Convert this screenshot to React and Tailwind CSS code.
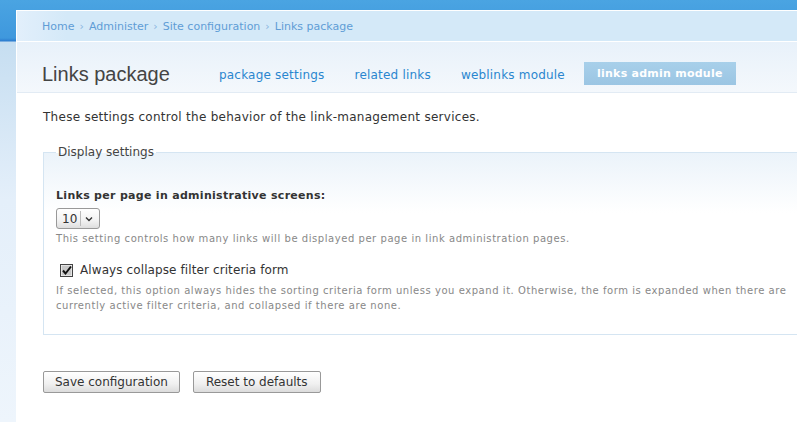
export default function App() {
  const font = { fontFamily: '"DejaVu Sans", Verdana, sans-serif' };
  return (
    <div
      className="w-[797px] h-[422px] overflow-hidden bg-[linear-gradient(to_bottom,#4aa4e2_0px,#3f98dd_38px,#2c7ccf_41px,#c6def1_42px,#e4effa_200px,#eef5fc_422px)]"
      style={font}
    >
      <div className="ml-[16px] mt-[10px] w-[800px] h-[420px] bg-white border-l border-t border-white flex flex-col">
        {/* breadcrumb */}
        <div className="h-[31px] flex items-center pt-[3px] pl-[25px] text-[11px] text-[#5f9dd6] bg-[linear-gradient(to_right,#e2effb_0px,#d4e9f8_50px,#d4e9f8_100%)] border-b border-white">
          <span>Home</span>
          <span className="mx-[5px] text-[#8ab6e0]">›</span>
          <span>Administer</span>
          <span className="mx-[5px] text-[#8ab6e0]">›</span>
          <span>Site configuration</span>
          <span className="mx-[5px] text-[#8ab6e0]">›</span>
          <span>Links package</span>
        </div>
        {/* header */}
        <div className="h-[51px] flex items-end pb-[7px] pl-[25px] bg-[linear-gradient(to_bottom,#e8f1fa,#f4f8fc)] border-b border-[#e2ebf4]">
          <h1
            className="text-[20px] text-[#444] w-[177px] h-[23px] flex items-center"
            style={{ fontFamily: '"Liberation Sans", Arial, sans-serif' }}
          >
            Links package
          </h1>
          <nav className="flex items-center h-[23px] text-[12px] text-[#2a86cf] tracking-[0.2px]">
            <span className="translate-y-[1px]">package settings</span>
            <span className="ml-[30px] translate-y-[1px]">related links</span>
            <span className="ml-[30px] translate-y-[1px]">weblinks module</span>
            <span className="ml-[19px] h-[23px] px-[13px] pt-[2px] flex items-center text-[11px] font-bold text-white bg-[linear-gradient(to_bottom,#a8d0ea,#9bc5e3)] tracking-[0.25px]">
              links admin module
            </span>
          </nav>
        </div>
        {/* content */}
        <div className="pl-[26px] pt-[16px]">
          <p className="text-[12px] text-[#333] tracking-[0.27px] leading-[16px]">
            These settings control the behavior of the link-management services.
          </p>
          <fieldset className="mt-[18px] border border-[#d5e5f2] border-r-0 bg-[linear-gradient(to_bottom,#ebf3fa,#ffffff_60px)] pl-[12px] pt-[27px] pb-[21px] min-w-0">
            <legend className="px-[2px] text-[12px] text-[#444]">Display settings</legend>
            <label className="block text-[11px] font-bold text-[#333] tracking-[0.3px] leading-[15px]">
              Links per page in administrative screens:
            </label>
            <div className="mt-[5px] w-[44px] h-[21px] border border-[#999] rounded-[3px] bg-[linear-gradient(to_bottom,#ffffff,#f2f2f2_60%,#dedede)] flex items-center text-[12px] text-[#333]">
              <span className="pl-[5px] w-[23px]">10</span>
              <span className="w-px h-[15px] bg-[#bbb]"></span>
              <svg width="12" height="10" viewBox="0 0 12 10" className="ml-[2px]">
                <path d="M3 3.5 L6 6.5 L9 3.5" stroke="#333" strokeWidth="1.4" fill="none" />
              </svg>
            </div>
            <p className="mt-[3px] text-[10px] text-[#888] tracking-[0.55px] leading-[14px]">
              This setting controls how many links will be displayed per page in link administration pages.
            </p>
            <div className="mt-[15px] flex items-center pl-[4px]">
              <svg width="13" height="13" viewBox="0 0 13 13">
                <rect x="0.5" y="0.5" width="12" height="12" fill="#fff" stroke="#444" />
                <rect x="1.5" y="1.5" width="10" height="10" fill="#c8c8c8" />
                <path d="M3 6.5 L5.5 9.5 L11 2.5" stroke="#111" strokeWidth="2" fill="none" />
              </svg>
              <span className="ml-[7px] text-[12px] text-[#333] tracking-[0.1px]">Always collapse filter criteria form</span>
            </div>
            <p className="mt-[4px] text-[10px] text-[#888] tracking-[0.55px] leading-[15px] whitespace-nowrap">
              If selected, this option always hides the sorting criteria form unless you expand it. Otherwise, the form is expanded when there are
              <br />
              currently active filter criteria, and collapsed if there are none.
            </p>
          </fieldset>
          <div className="mt-[36px] flex gap-[13px]">
            <button className="h-[22px] px-[11px] border border-[#999] rounded-[2px] bg-[linear-gradient(to_bottom,#ffffff,#f0f0f0_60%,#dcdcdc)] text-[12px] text-[#333]">
              Save configuration
            </button>
            <button className="h-[22px] px-[12px] border border-[#999] rounded-[2px] bg-[linear-gradient(to_bottom,#ffffff,#f0f0f0_60%,#dcdcdc)] text-[12px] text-[#333]">
              Reset to defaults
            </button>
          </div>
        </div>
      </div>
    </div>
  );
}
